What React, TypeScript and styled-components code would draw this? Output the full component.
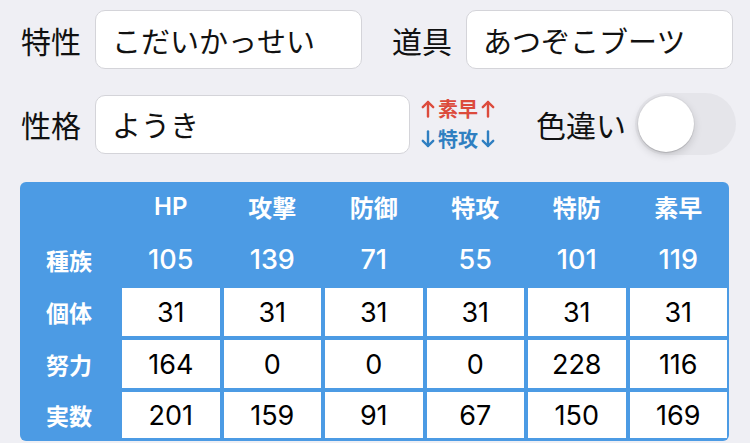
import React from "react";
import styled, { createGlobalStyle } from "styled-components";

const GlobalStyle = createGlobalStyle`
  html, body {
    margin: 0;
    padding: 0;
    background: #efeff4;
  }
  body {
    font-family: "Inter", "Noto Sans CJK JP", sans-serif;
    color: #000;
  }
  * { box-sizing: border-box; }
`;

const Page = styled.div`
  width: 750px;
  height: 443px;
  display: flex;
  flex-direction: column;
  padding-top: 10px;
  overflow: hidden;
`;

const Row = styled.div<{ $pr: number; $h: number; $mb: number }>`
  display: flex;
  align-items: center;
  height: ${(p) => p.$h}px;
  padding: 0 ${(p) => p.$pr}px 0 21px;
  margin-bottom: ${(p) => p.$mb}px;
`;

const FieldGroup = styled.div<{ $grow?: boolean }>`
  display: flex;
  align-items: center;
  gap: 14px;
  flex: ${(p) => (p.$grow ? "1 1 0" : "0 0 auto")};
`;

const Label = styled.span`
  font-family: "Noto Sans CJK JP", sans-serif;
  font-size: 30px;
  line-height: 1;
  white-space: nowrap;
  color: #111;
`;

const TextBox = styled.div<{ $w: number }>`
  width: ${(p) => p.$w}px;
  height: 59px;
  background: #fff;
  border: 1px solid #d4d4d9;
  border-radius: 10px;
  display: flex;
  align-items: center;
  padding-left: 16px;
  font-family: "Noto Sans CJK JP", sans-serif;
  font-size: 29px;
  color: #111;
  white-space: nowrap;
`;

const NatureBox = styled.div`
  display: flex;
  flex-direction: column;
  margin-left: 11px;
  font-family: "Noto Sans CJK JP", sans-serif;
  font-size: 20px;
  font-weight: 700;
  line-height: 30px;
`;

const NatureLine = styled.span<{ $color: string }>`
  color: ${(p) => p.$color};
  white-space: nowrap;
  display: flex;
  align-items: center;
  gap: 3px;
`;

const ArrowSvg = styled.svg`
  width: 14px;
  height: 18px;
  flex: 0 0 auto;
`;

function Arrow({ down }: { down?: boolean }) {
  return (
    <ArrowSvg viewBox="0 0 14 18" fill="none" stroke="currentColor" strokeWidth={2.4} strokeLinecap="round" strokeLinejoin="round">
      {down ? (
        <>
          <path d="M7 1.5V16" />
          <path d="M1.8 10.8 7 16l5.2-5.2" />
        </>
      ) : (
        <>
          <path d="M7 16.5V2" />
          <path d="M1.8 7.2 7 2l5.2 5.2" />
        </>
      )}
    </ArrowSvg>
  );
}

const ShinyLabel = styled(Label)`
  margin-left: 41px;
  margin-right: 9px;
`;

const Track = styled.div<{ $on: boolean }>`
  width: 101px;
  height: 62px;
  border-radius: 31px;
  background: ${(p) => (p.$on ? "#34c759" : "#e5e5ea")};
  padding: 3px;
  display: flex;
  justify-content: ${(p) => (p.$on ? "flex-end" : "flex-start")};
  align-items: center;
  flex: 0 0 auto;
`;

const Knob = styled.div`
  width: 56px;
  height: 56px;
  border-radius: 50%;
  background: #fff;
  box-shadow: 0 3px 8px rgba(0, 0, 0, 0.15), 0 1px 1px rgba(0, 0, 0, 0.12),
    0 0 0 1px rgba(0, 0, 0, 0.03);
`;

const Table = styled.div`
  margin: 0 21px 0 20px;
  background: #4c9be4;
  border-radius: 6px;
  display: grid;
  grid-template-columns: 98px repeat(6, 1fr);
  grid-template-rows: 49px 49px 48px 48px 46px;
  column-gap: 4px;
  row-gap: 4px;
  padding: 0 2px 3px 0;
`;

const HeadCell = styled.div`
  display: flex;
  align-items: center;
  justify-content: center;
  color: #fff;
  font-size: 24px;
  font-weight: 600;
`;

const RowLabel = styled.div`
  display: flex;
  align-items: center;
  justify-content: center;
  color: #fff;
  font-family: "Noto Sans CJK JP", sans-serif;
  font-size: 23px;
  font-weight: 700;
`;

const BaseCell = styled.div`
  display: flex;
  align-items: center;
  justify-content: center;
  color: #fff;
  font-size: 27px;
  font-weight: 500;
`;

const ValueCell = styled.div`
  display: flex;
  align-items: center;
  justify-content: center;
  background: #fff;
  color: #000;
  font-size: 27px;
  font-weight: 400;
`;

const heads = ["HP", "攻撃", "防御", "特攻", "特防", "素早"];
const base = [105, 139, 71, 55, 101, 119];
const rows: { label: string; values: number[] }[] = [
  { label: "個体", values: [31, 31, 31, 31, 31, 31] },
  { label: "努力", values: [164, 0, 0, 0, 228, 116] },
  { label: "実数", values: [201, 159, 91, 67, 150, 169] },
];

export default function App() {
  return (
    <>
      <GlobalStyle />
      <Page>
        <Row $pr={17} $h={59} $mb={24}>
          <FieldGroup $grow>
            <Label>特性</Label>
            <TextBox $w={267}>こだいかっせい</TextBox>
          </FieldGroup>
          <FieldGroup>
            <Label>道具</Label>
            <TextBox $w={267}>あつぞこブーツ</TextBox>
          </FieldGroup>
        </Row>
        <Row $pr={12} $h={62} $mb={27}>
          <FieldGroup>
            <Label>性格</Label>
            <TextBox $w={315}>ようき</TextBox>
          </FieldGroup>
          <NatureBox>
            <NatureLine $color="#dc4b3c">
              <Arrow />素早<Arrow />
            </NatureLine>
            <NatureLine $color="#2f7fc1">
              <Arrow down />特攻<Arrow down />
            </NatureLine>
          </NatureBox>
          <ShinyLabel>色違い</ShinyLabel>
          <Track $on={false}>
            <Knob />
          </Track>
        </Row>
        <Table>
          <HeadCell />
          {heads.map((h) => (
            <HeadCell key={h}>{h}</HeadCell>
          ))}
          <RowLabel>種族</RowLabel>
          {base.map((b, i) => (
            <BaseCell key={i}>{b}</BaseCell>
          ))}
          {rows.map((r) => (
            <React.Fragment key={r.label}>
              <RowLabel>{r.label}</RowLabel>
              {r.values.map((v, i) => (
                <ValueCell key={i}>{v}</ValueCell>
              ))}
            </React.Fragment>
          ))}
        </Table>
      </Page>
    </>
  );
}
